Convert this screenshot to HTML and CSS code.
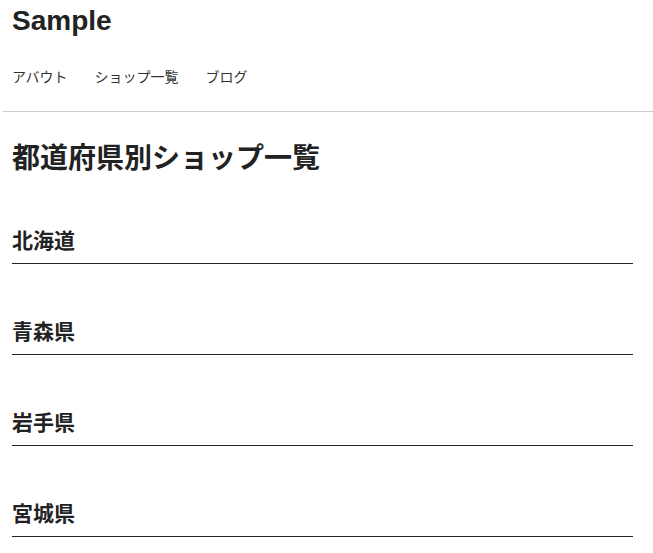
FILE: index.html
```html
<!DOCTYPE html>
<html lang="ja">
<head>
<meta charset="utf-8">
<title>Sample</title>
<link rel="stylesheet" href="styles.css">
</head>
<body>
<header class="site-header">
  <div class="brand">Sample</div>
  <nav class="nav">
    <a class="nav-link" href="#">アバウト</a>
    <a class="nav-link" href="#">ショップ一覧</a>
    <a class="nav-link" href="#">ブログ</a>
  </nav>
</header>
<main class="content">
  <h1 class="page-title">都道府県別ショップ一覧</h1>
  <div class="pref-list">
    <section class="pref"><h2 class="pref-name">北海道</h2></section>
    <section class="pref"><h2 class="pref-name">青森県</h2></section>
    <section class="pref"><h2 class="pref-name">岩手県</h2></section>
    <section class="pref"><h2 class="pref-name">宮城県</h2></section>
  </div>
</main>
</body>
</html>
```

FILE: styles.css
```css
html, body {
  margin: 0;
  padding: 0;
  background: #fff;
}
body {
  font-family: "Liberation Sans", "Noto Sans CJK JP", sans-serif;
  color: #222;
  overflow: hidden;
}
.site-header {
  margin-left: 3px;
  padding: 6px 0 24px 9px;
  border-bottom: 1px solid #cccccc;
}
.brand {
  font-size: 28px;
  line-height: 30px;
  font-weight: bold;
  color: #222;
}
.nav {
  display: flex;
  gap: 27px;
  margin-top: 31px;
  font-size: 14px;
  line-height: 20px;
}
.nav-link {
  color: #333;
  text-decoration: none;
}
.content {
  padding: 0 20px 0 12px;
}
.page-title {
  margin: 27px 0 0;
  font-size: 28px;
  line-height: 40px;
  font-weight: bold;
  color: #222;
}
.pref-list {
  display: flex;
  flex-direction: column;
  gap: 53px;
  margin-top: 47px;
}
.pref {
  border-bottom: 1px solid #212529;
  padding-bottom: 7px;
}
.pref-name {
  margin: 0;
  font-size: 21px;
  line-height: 30px;
  font-weight: bold;
  color: #222;
}
```
